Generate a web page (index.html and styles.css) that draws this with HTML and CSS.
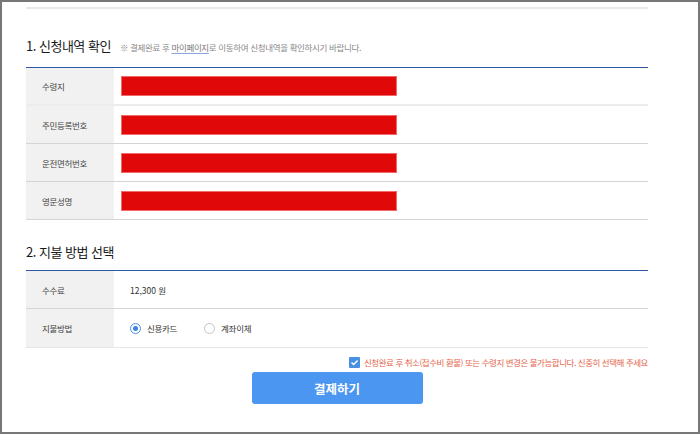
FILE: index.html
```html
<!DOCTYPE html>
<html lang="ko">
<head>
    <meta charset="UTF-8">
    <meta name="viewport" content="width=device-width, initial-scale=1.0">
    <title>결제하기</title>
    <link rel="stylesheet" href="styles.css">
</head>
<body>
    <div class="marco">
        <div class="contenido">
            <!-- 1. 신청내역 확인 -->
            <div class="titulo-seccion">
                <h2>1. 신청내역 확인</h2>
                <p class="aviso">※ 결제완료 후 <span class="enlace">마이페이지</span>로 이동하여 신청내역을 확인하시기 바랍니다.</p>
            </div>
            <div class="tabla">
                <div class="fila primera">
                    <div class="etiqueta">수령지</div>
                    <div class="valor"><span class="oculto"></span></div>
                </div>
                <div class="fila">
                    <div class="etiqueta">주민등록번호</div>
                    <div class="valor"><span class="oculto"></span></div>
                </div>
                <div class="fila">
                    <div class="etiqueta">운전면허번호</div>
                    <div class="valor"><span class="oculto"></span></div>
                </div>
                <div class="fila">
                    <div class="etiqueta">영문성명</div>
                    <div class="valor"><span class="oculto"></span></div>
                </div>
            </div>

            <!-- 2. 지불 방법 선택 -->
            <div class="titulo-seccion segunda">
                <h2>2. 지불 방법 선택</h2>
            </div>
            <div class="tabla">
                <div class="fila">
                    <div class="etiqueta">수수료</div>
                    <div class="valor texto">12,300 원</div>
                </div>
                <div class="fila ultima">
                    <div class="etiqueta">지불방법</div>
                    <div class="valor texto">
                        <label class="opcion"><span class="radio activo"></span>신용카드</label>
                        <label class="opcion"><span class="radio"></span>계좌이체</label>
                    </div>
                </div>
            </div>

            <div class="confirmar">
                <span class="casilla">
                    <svg width="9" height="9" viewBox="0 0 9 9"><path d="M1.5 4.6 L3.6 6.6 L7.6 2.4" fill="none" stroke="#fff" stroke-width="1.4"/></svg>
                </span>
                <span class="advertencia">신청완료 후 취소(접수비 환불) 또는 수령지 변경은 불가능합니다. 신중히 선택해 주세요</span>
            </div>

            <div class="acciones">
                <button>결제하기</button>
            </div>
        </div>
    </div>
</body>
</html>
```

FILE: styles.css
```css
body {
    margin: 0;
    font-family: "Noto Sans CJK KR", sans-serif;
    background-color: #fff;
}
.marco {
    box-sizing: border-box;
    width: 700px;
    height: 434px;
    border: 2px solid #777;
    padding: 5px 0 0 24px;
}
.contenido {
    width: 622px;
    border-top: 2px solid #e9e9e9;
}
.titulo-seccion {
    display: flex;
    align-items: center;
    padding: 28px 0 12px;
    height: 18px;
}
.titulo-seccion.segunda {
    padding: 23px 0 9px;
}
h2 {
    margin: 0;
    font-size: 13px;
    font-weight: 400;
    color: #1a1a1a;
    letter-spacing: -0.5px;
    line-height: 18px;
}
.aviso {
    margin: 2px 0 0 9px;
    font-size: 8.5px;
    color: #888;
    letter-spacing: -0.35px;
}
.enlace {
    color: #777;
    text-decoration: underline;
    text-decoration-color: #8ea8dc;
    text-underline-offset: 2px;
}
.tabla {
    border-top: 1px solid #2d58a4;
}
.fila {
    display: flex;
    height: 37px;
    border-bottom: 1px solid #d4d4d4;
}
.fila.primera {
    height: 36px;
    border-bottom: 2px solid #ececec;
}
.fila.ultima {
    height: 38px;
    border-bottom: 1px solid #e6e6e6;
}
.etiqueta {
    width: 72px;
    padding-left: 16px;
    background-color: #f1f1f1;
    display: flex;
    align-items: center;
    font-size: 8.5px;
    color: #444;
    letter-spacing: -0.3px;
}
.valor {
    display: flex;
    align-items: center;
    padding-left: 7px;
}
.valor.texto {
    padding-left: 16px;
    font-size: 8.5px;
    color: #333;
    gap: 27px;
}
.oculto {
    display: block;
    box-sizing: border-box;
    width: 276px;
    height: 20px;
    background-color: #e00808;
    border: 1px solid #f26a6a;
}
.opcion {
    display: flex;
    align-items: center;
    gap: 6px;
    letter-spacing: -0.3px;
}
.radio {
    box-sizing: border-box;
    width: 11px;
    height: 11px;
    border-radius: 50%;
    border: 1px solid #c4c4c4;
    background-color: #fff;
    position: relative;
}
.radio.activo {
    border-color: #4a8fe6;
}
.radio.activo::after {
    content: "";
    position: absolute;
    left: 2px;
    top: 2px;
    width: 5px;
    height: 5px;
    border-radius: 50%;
    background-color: #3b82e6;
}
.confirmar {
    display: flex;
    justify-content: flex-end;
    align-items: center;
    gap: 4px;
    margin-top: 8px;
    height: 12px;
}
.casilla {
    width: 11px;
    height: 11px;
    background-color: #4a90e2;
    border-radius: 1px;
    display: flex;
    align-items: center;
    justify-content: center;
}
.advertencia {
    font-size: 8.5px;
    color: #e5644c;
    letter-spacing: -0.45px;
}
.acciones {
    display: flex;
    justify-content: center;
    margin-top: 4px;
}
button {
    width: 171px;
    height: 32px;
    border: none;
    border-radius: 3px;
    background-color: #4b96f0;
    color: #fff;
    font-family: "Noto Sans CJK KR", sans-serif;
    font-size: 12.5px;
    font-weight: bold;
    cursor: pointer;
}
```
